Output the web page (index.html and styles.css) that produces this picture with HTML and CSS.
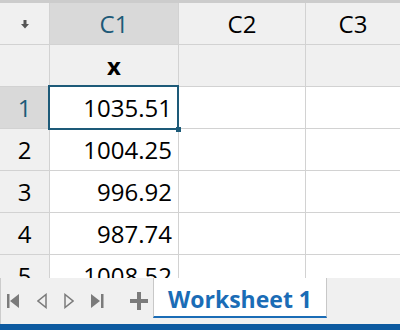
FILE: index.html
```html
<!DOCTYPE html>
<html lang="en">
<head>
  <meta charset="UTF-8">
  <title>Worksheet 1</title>
  <link rel="stylesheet" href="styles.css">
</head>
<body>
<div class="janela">
  <div class="faixa-topo"></div>
  <div class="planilha">
    <div class="grade">
      <div class="canto">
        <svg width="10" height="10" viewBox="0 0 10 10"><path d="M3.5 1h3v4h2.5l-4 4.5l-4-4.5h2.5z" fill="#555"/></svg>
      </div>
      <div class="cab-col ativo">C1</div>
      <div class="cab-col">C2</div>
      <div class="cab-col">C3</div>

      <div class="num-linha"></div>
      <div class="nome-col">x</div>
      <div class="nome-col"></div>
      <div class="nome-col"></div>

      <div class="num-linha ativo">1</div>
      <div class="celula selecionada">1035.51</div>
      <div class="celula"></div>
      <div class="celula"></div>

      <div class="num-linha">2</div>
      <div class="celula">1004.25</div>
      <div class="celula"></div>
      <div class="celula"></div>

      <div class="num-linha">3</div>
      <div class="celula">996.92</div>
      <div class="celula"></div>
      <div class="celula"></div>

      <div class="num-linha">4</div>
      <div class="celula">987.74</div>
      <div class="celula"></div>
      <div class="celula"></div>

      <div class="num-linha">5</div>
      <div class="celula">1008.52</div>
      <div class="celula"></div>
      <div class="celula"></div>
    </div>
  </div>

  <div class="barra-abas">
    <div class="navegacao">
      <svg class="icone" width="13" height="16" viewBox="0 0 13 16"><rect x="0" y="1" width="2.5" height="14" fill="#7b7b7b"/><path d="M12 1v14l-9-7z" fill="#7b7b7b"/></svg>
      <svg class="icone" width="10" height="16" viewBox="0 0 10 16"><path d="M9 1.5v13l-8-6.5z" fill="none" stroke="#7b7b7b" stroke-width="1.5"/></svg>
      <svg class="icone" width="10" height="16" viewBox="0 0 10 16"><path d="M1 1.5v13l8-6.5z" fill="none" stroke="#7b7b7b" stroke-width="1.5"/></svg>
      <svg class="icone" width="13" height="16" viewBox="0 0 13 16"><path d="M0 1v14l9-7z" fill="#7b7b7b"/><rect x="10" y="1" width="2.5" height="14" fill="#7b7b7b"/></svg>
      <svg class="icone mais" width="18" height="18" viewBox="0 0 18 18"><path d="M7 0h4v7h7v4h-7v7h-4v-7h-7v-4h7z" fill="#7b7b7b"/></svg>
    </div>
    <div class="aba">Worksheet 1</div>
  </div>
  <div class="faixa-azul"></div>
</div>
</body>
</html>
```

FILE: styles.css
```css
body {
  margin: 0;
  font-family: "Open Sans", "Noto Sans", sans-serif;
  background: #ffffff;
}
.janela {
  width: 400px;
  height: 330px;
  display: flex;
  flex-direction: column;
  overflow: hidden;
}
.faixa-topo {
  height: 3px;
  background: #cccccc;
}
.planilha {
  flex: 1;
  overflow: hidden;
}
.grade {
  display: grid;
  grid-template-columns: 49px 128px 126px 1fr;
  grid-template-rows: 41px;
  grid-auto-rows: 41px;
  gap: 1px;
  background: #d2d2d2;
}
.grade > div {
  display: flex;
  align-items: center;
  font-size: 24px;
  color: #000;
}
.canto {
  background: #f0f0f0;
  justify-content: center;
}
.cab-col {
  background: #f0f0f0;
  justify-content: center;
}
.cab-col.ativo {
  background: #d9d9d9;
  color: #1d5a78 !important;
}
.nome-col {
  background: #f0f0f0;
  justify-content: center;
  font-weight: bold;
}
.num-linha {
  background: #f0f0f0;
  justify-content: center;
}
.num-linha.ativo {
  background: #d9d9d9;
  color: #1d5a78 !important;
}
.celula {
  background: #ffffff;
  justify-content: flex-end;
  padding-right: 6px;
}
.celula.selecionada {
  position: relative;
}
.celula.selecionada::after {
  content: '';
  position: absolute;
  top: -2px;
  left: -2px;
  right: -1px;
  bottom: -2px;
  border: 2px solid #1d5a78;
}
.celula.selecionada::before {
  content: '';
  position: absolute;
  right: -3px;
  bottom: -4px;
  width: 5px;
  height: 5px;
  background: #1d5a78;
  z-index: 1;
}
.barra-abas {
  height: 46px;
  display: flex;
  background: #f0f0f0;
  border-left: 1px solid #cccccc;
}
.navegacao {
  width: 152px;
  flex-shrink: 0;
  display: flex;
  align-items: center;
  padding-left: 6px;
  box-sizing: border-box;
}
.icone {
  flex-shrink: 0;
  margin-right: 17px;
}
.icone.mais {
  margin-left: 9px;
  margin-right: 0;
}
.aba {
  width: 174px;
  height: 40px;
  flex-shrink: 0;
  background: #ffffff;
  border-left: 1px solid #c8c8c8;
  border-right: 1px solid #c8c8c8;
  border-bottom: 2px solid #1a6cb6;
  color: #1a6cb6;
  font-weight: bold;
  font-size: 23px;
  display: flex;
  align-items: center;
  justify-content: center;
  padding-top: 3px;
  box-sizing: border-box;
}
.faixa-azul {
  height: 6px;
  background: #0d5aa0;
}
```
